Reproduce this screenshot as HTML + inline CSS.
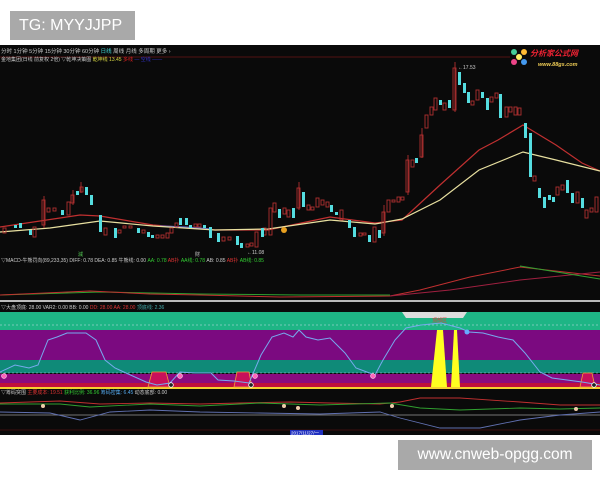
<!DOCTYPE html>
<html><head><meta charset="utf-8"><style>
body{margin:0;width:600px;height:480px;background:#fff;position:relative;overflow:hidden;font-family:"Liberation Sans","Noto Sans CJK SC",sans-serif}
.box{position:absolute;background:#a9a9a9;color:#fff}
</style></head><body>
<div class="box" style="left:10px;top:11px;width:125px;height:29px;font-size:16px;line-height:29px;padding-left:9px;box-sizing:border-box">TG: MYYJJPP</div>
<svg style="position:absolute;left:0;top:45px" width="600" height="390" viewBox="0 45 600 390" font-family="Liberation Sans,Noto Sans CJK SC,sans-serif">
<rect x="0" y="45" width="600" height="390" fill="#0a0a0a"/>
<line x1="0" y1="57" x2="510" y2="57" stroke="#6a1515" stroke-width="0.7"/>
<text x="1" y="53" font-size="5.5" fill="#ccc">分时  1分钟  5分钟  15分钟  30分钟  60分钟  <tspan fill="#4dd">日线</tspan>  周线  月线  多周期  更多 ›</text>
<text x="1" y="61" font-size="5" fill="#ccc">金地集团(日线 前复权 2倍)  ▽乾坤决策图  <tspan fill="#dd4">乾坤线 13.45</tspan> <tspan fill="#d22">多线</tspan> <tspan fill="#33c">— 空线 ——</tspan></text>
<!-- logo -->
<g transform="translate(519,57)"><circle cx="-5" cy="-5" r="3" fill="#4c9"/><circle cx="5" cy="-5" r="3" fill="#fb3"/><circle cx="-5" cy="5" r="3" fill="#e48"/><circle cx="5" cy="5" r="3" fill="#49e"/><circle cx="0" cy="0" r="3" fill="#fe6"/></g>
<text x="530" y="56" font-size="8" font-weight="bold" font-style="italic" fill="#e23">分析家公式网</text>
<text x="538" y="66" font-size="5.5" font-weight="bold" font-style="italic" fill="#ec5">www.88gs.com</text>
<!-- MAs -->
<polyline fill="none" stroke="#c03030" stroke-width="1.2" points="0,227 40,221 80,215 100,216 153,225 215,230 268,230 330,217 375,223 402,220 440,185 479,150 498,140 523,125 556,145 582,163 600,171"/>
<polyline fill="none" stroke="#5560c0" stroke-width="1.2" points="160,226 185,227 211,229"/>
<polyline fill="none" stroke="#e8e0a0" stroke-width="1.2" points="0,232 50,228 100,221 153,226 215,230 268,229 330,220 375,224 402,219 440,200 479,170 523,152 556,160 600,171"/>
<circle cx="284" cy="230" r="3" fill="#e8a020"/>
<g stroke="#b03030" fill="none" stroke-width="0.9">
<path d="M44,196V228 M73,190V205 M81,182V193 M299,182V210 M455,62V112 M422,128V158 M408,155V195 M384,205V236"/>
<rect x="3" y="228" width="3" height="5"/><rect x="33" y="227" width="3" height="10"/><rect x="42" y="200" width="3" height="25"/><rect x="47" y="208" width="3" height="4"/><rect x="53" y="208" width="3" height="3"/><rect x="67" y="202" width="3" height="13"/><rect x="71" y="195" width="3" height="8"/><rect x="80" y="187" width="3" height="5"/><rect x="104" y="228" width="3" height="7"/><rect x="118" y="230" width="3" height="3"/><rect x="123" y="226" width="3" height="2"/><rect x="129" y="226" width="3" height="2"/><rect x="142" y="230" width="3" height="3"/><rect x="156" y="235" width="3" height="3"/><rect x="161" y="235" width="3" height="3"/><rect x="166" y="233" width="3" height="5"/><rect x="170" y="228" width="3" height="5"/><rect x="175" y="223" width="3" height="4"/><rect x="194" y="224" width="3" height="3"/><rect x="198" y="224" width="3" height="3"/><rect x="222" y="237" width="3" height="4"/><rect x="228" y="237" width="3" height="3"/><rect x="246" y="244" width="3" height="3"/><rect x="250" y="243" width="3" height="3"/><rect x="255" y="232" width="3" height="15"/><rect x="263" y="228" width="3" height="7"/><rect x="269" y="208" width="3" height="27"/><rect x="273" y="203" width="3" height="9"/><rect x="283" y="208" width="3" height="6"/><rect x="287" y="210" width="3" height="7"/><rect x="297" y="188" width="3" height="20"/><rect x="307" y="205" width="3" height="5"/><rect x="311" y="207" width="3" height="3"/><rect x="316" y="198" width="3" height="9"/><rect x="321" y="200" width="3" height="5"/><rect x="326" y="202" width="3" height="5"/><rect x="340" y="210" width="3" height="10"/><rect x="359" y="233" width="3" height="3"/><rect x="363" y="233" width="3" height="2"/><rect x="373" y="227" width="3" height="15"/><rect x="382" y="212" width="3" height="21"/><rect x="387" y="200" width="3" height="12"/><rect x="392" y="200" width="3" height="2"/><rect x="397" y="197" width="3" height="5"/><rect x="401" y="197" width="3" height="3"/><rect x="406" y="160" width="3" height="32"/><rect x="411" y="160" width="3" height="7"/><rect x="420" y="135" width="3" height="22"/><rect x="425" y="115" width="3" height="13"/><rect x="430" y="107" width="3" height="8"/><rect x="434" y="98" width="3" height="12"/><rect x="443" y="103" width="3" height="7"/><rect x="453" y="68" width="3" height="42"/><rect x="471" y="101" width="3" height="4"/><rect x="476" y="90" width="3" height="10"/><rect x="490" y="97" width="3" height="5"/><rect x="495" y="93" width="3" height="5"/><rect x="505" y="107" width="3" height="10"/><rect x="509" y="107" width="3" height="5"/><rect x="514" y="107" width="3" height="8"/><rect x="518" y="108" width="3" height="7"/><rect x="533" y="176" width="3" height="5"/><rect x="556" y="187" width="3" height="8"/><rect x="561" y="185" width="3" height="5"/><rect x="576" y="192" width="3" height="11"/><rect x="585" y="210" width="3" height="8"/><rect x="590" y="208" width="3" height="4"/><rect x="595" y="197" width="3" height="15"/>
</g>
<g fill="#55dde0">
<rect x="14" y="225" width="3" height="3"/><rect x="19" y="223" width="3" height="5"/><rect x="29" y="230" width="3" height="5"/><rect x="61" y="210" width="3" height="5"/><rect x="76" y="191" width="3" height="4"/><rect x="85" y="187" width="3" height="8"/><rect x="90" y="195" width="3" height="10"/><rect x="99" y="215" width="3" height="17"/><rect x="114" y="228" width="3" height="10"/><rect x="137" y="228" width="3" height="5"/><rect x="147" y="232" width="3" height="5"/><rect x="151" y="235" width="3" height="3"/><rect x="179" y="218" width="3" height="7"/><rect x="185" y="218" width="3" height="7"/><rect x="189" y="225" width="3" height="3"/><rect x="203" y="225" width="3" height="3"/><rect x="209" y="227" width="3" height="11"/><rect x="217" y="233" width="3" height="9"/><rect x="236" y="236" width="3" height="9"/><rect x="240" y="243" width="3" height="5"/><rect x="261" y="228" width="3" height="9"/><rect x="278" y="209" width="3" height="9"/><rect x="292" y="208" width="3" height="10"/><rect x="302" y="192" width="3" height="15"/><rect x="330" y="205" width="3" height="7"/><rect x="335" y="212" width="3" height="3"/><rect x="348" y="220" width="3" height="8"/><rect x="353" y="227" width="3" height="10"/><rect x="368" y="235" width="3" height="7"/><rect x="378" y="230" width="3" height="8"/><rect x="415" y="158" width="3" height="5"/><rect x="439" y="100" width="3" height="5"/><rect x="448" y="100" width="3" height="8"/><rect x="458" y="72" width="3" height="13"/><rect x="463" y="83" width="3" height="10"/><rect x="467" y="92" width="3" height="11"/><rect x="481" y="92" width="3" height="6"/><rect x="486" y="98" width="3" height="12"/><rect x="499" y="94" width="3" height="24"/><rect x="524" y="123" width="3" height="15"/><rect x="529" y="133" width="3" height="44"/><rect x="538" y="188" width="3" height="10"/><rect x="543" y="197" width="3" height="11"/><rect x="548" y="195" width="3" height="5"/><rect x="552" y="197" width="3" height="5"/><rect x="566" y="180" width="3" height="13"/><rect x="571" y="193" width="3" height="10"/><rect x="581" y="198" width="3" height="10"/>
</g>
<text x="458" y="69" font-size="5" fill="#ccc">←17.53</text>
<text x="247" y="254" font-size="5" fill="#ccc">←11.08</text>
<text x="78" y="256" font-size="5" fill="#5c5">減</text><text x="195" y="256" font-size="5" fill="#ccc">財</text>
<!-- MACD -->
<text x="1" y="262" font-size="5" fill="#ccc">▽MACD-牛熊罚向(89,233,35) DIFF: 0.78 DEA: 0.85 牛熊线: 0.00 <tspan fill="#3c3">AA: 0.78</tspan> <tspan fill="#d33">AB扑</tspan>  <tspan fill="#3c3">AA线: 0.78</tspan> AB: 0.85 <tspan fill="#d33">AB扑</tspan>  <tspan fill="#3c3">AB线: 0.85</tspan></text>
<polyline fill="none" stroke="#30a030" stroke-width="1" points="0,295 100,292 200,294 300,295 390,295"/>
<polyline fill="none" stroke="#c03030" stroke-width="1" points="0,295 90,291 150,294 200,295 280,297 390,296 420,290 470,277 520,267 600,276"/>
<polyline fill="none" stroke="#a02040" stroke-width="1" points="390,296 450,290 520,280 600,272"/>
<polyline fill="none" stroke="#30a030" stroke-width="1" points="520,266 600,279"/>
<rect x="0" y="300" width="600" height="2" fill="#bbb"/>
<!-- panel 3 -->
<text x="1" y="309" font-size="5" fill="#ccc">▽大盘顶底: 28.00     VAR2: 0.00 BB: 0.00 <tspan fill="#d33">DD: 28.00 AA: 28.00</tspan>          <tspan fill="#4aa">顶底线: 2.36</tspan></text>
<rect x="0" y="312" width="600" height="18" fill="#1eb585"/>
<line x1="0" y1="325" x2="600" y2="325" stroke="#cde" stroke-dasharray="2,2" stroke-width="0.6"/>
<rect x="0" y="330" width="600" height="30" fill="#7b0a80"/>
<rect x="0" y="360" width="600" height="13" fill="#0f8a78"/>
<line x1="0" y1="373" x2="600" y2="373" stroke="#cce" stroke-dasharray="2,2" stroke-width="0.6"/>
<rect x="0" y="374" width="600" height="9" fill="#8a0a80"/>
<rect x="0" y="383" width="600" height="4" fill="#c0103a"/>
<rect x="0" y="387" width="600" height="2" fill="#f5d030"/>
<polygon points="402,312 467,312 463,318 406,318" fill="#ddd"/>
<polygon points="431,387 437,330 443,330 447,387" fill="#ffff20"/>
<polygon points="451,387 454,330 457,330 460,387" fill="#ffff20"/>
<polygon points="148,387 152,372 166,372 170,387" fill="#c8105a" stroke="#f0a030" stroke-width="0.8"/>
<polygon points="234,387 237,372 249,372 252,387" fill="#c8105a" stroke="#f0a030" stroke-width="0.8"/>
<polygon points="580,387 583,373 592,373 595,387" fill="#c8105a" stroke="#f0a030" stroke-width="0.8"/>
<text x="432" y="322" font-size="5" fill="#e33">顶部区</text>
<polyline fill="none" stroke="#7ae" stroke-width="1" points="0,372 15,365 29,368 38,365 48,340 57,337 67,333 86,333 96,340 105,360 115,368 126,373 146,382 157,385 170,383 180,372 195,373 211,373 218,380 234,381 249,383 261,355 272,337 284,333 293,337 299,330 306,337 318,340 330,338 345,353 356,368 375,375 383,360 395,340 406,328 421,325 441,323 460,328 469,332 483,333 498,337 513,340 525,353 540,372 552,378 567,380 582,382 600,385"/>
<g fill="#f6b" stroke="#fff" stroke-width="0.5"><circle cx="4" cy="376" r="2.5"/><circle cx="180" cy="376" r="2.5"/><circle cx="255" cy="376" r="2.5"/><circle cx="373" cy="376" r="2.5"/></g>
<g fill="#222" stroke="#fff" stroke-width="0.8"><circle cx="171" cy="385" r="2.3"/><circle cx="251" cy="385" r="2.3"/><circle cx="594" cy="385" r="2.3"/></g>
<circle cx="467" cy="332" r="2.5" fill="#6af"/>
<!-- panel 4 -->
<text x="1" y="394" font-size="5" fill="#ccc">▽筹码突围 <tspan fill="#d33">主要成本: 19.51</tspan>  <tspan fill="#3c3">获利比例: 36.96</tspan>  <tspan fill="#5ae">筹码密集: 6.45</tspan>  动态底部: 0.00</text>
<line x1="0" y1="415" x2="600" y2="415" stroke="#999" stroke-width="0.8"/>
<polyline fill="none" stroke="#c03030" stroke-width="0.9" points="0,403 60,401 100,404 150,403 200,404 240,403 290,402 330,403 380,404 400,402 420,398 460,398 520,402 560,405 600,405"/>
<polyline fill="none" stroke="#30a030" stroke-width="0.9" points="0,404 60,404 90,407 150,404 200,406 260,403 320,405 390,403 420,408 460,410 520,408 560,409 600,408"/>
<polyline fill="none" stroke="#6070b0" stroke-width="0.9" points="0,412 50,413 80,420 110,412 150,410 200,412 260,413 320,414 380,412 400,418 440,428 480,428 520,420 560,415 600,412"/>
<g fill="#eca" font-size="5"><circle cx="43" cy="406" r="2"/><circle cx="284" cy="406" r="2"/><circle cx="298" cy="408" r="2"/><circle cx="392" cy="406" r="2"/><circle cx="576" cy="409" r="2"/></g>
<line x1="0" y1="430" x2="600" y2="430" stroke="#501010" stroke-width="0.8"/>
<rect x="290" y="430" width="33" height="5" fill="#2030c0"/>
<text x="291" y="434.5" font-size="4.5" fill="#fff">2017/11/27/一</text>
</svg>
<div class="box" style="left:398px;top:440px;width:194px;height:30px;font-size:15.5px;line-height:30px;text-align:center">www.cnweb-opgg.com</div>
</body></html>
